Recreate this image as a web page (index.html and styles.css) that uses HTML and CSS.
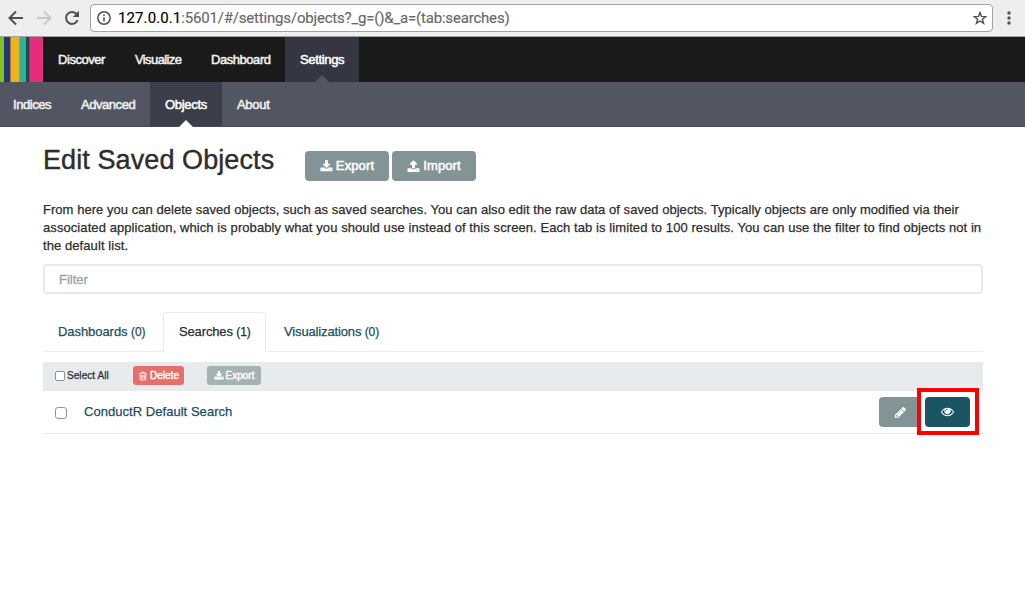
FILE: index.html
```html
<!DOCTYPE html>
<html lang="en">
<head>
<meta charset="utf-8">
<title>Settings - Kibana</title>
<link rel="stylesheet" href="styles.css">
</head>
<body>
<svg class="sprite" width="0" height="0">
  <symbol id="download" viewBox="0 0 1792 1792"><path d="M1344 1344q0-26-19-45t-45-19-45 19-19 45 19 45 45 19 45-19 19-45zm256 0q0-26-19-45t-45-19-45 19-19 45 19 45 45 19 45-19 19-45zm128-224v320q0 40-28 68t-68 28h-1472q-40 0-68-28t-28-68v-320q0-40 28-68t68-28h465l135 136q58 56 136 56t136-56l136-136h464q40 0 68 28t28 68zm-325-569q17 41-14 70l-448 448q-18 19-45 19t-45-19l-448-448q-31-29-14-70 17-39 59-39h256v-448q0-26 19-45t45-19h256q26 0 45 19t19 45v448h256q42 0 59 39z"/></symbol>
  <symbol id="upload" viewBox="0 0 1792 1792"><path d="M1344 1472q0-26-19-45t-45-19-45 19-19 45 19 45 45 19 45-19 19-45zm256 0q0-26-19-45t-45-19-45 19-19 45 19 45 45 19 45-19 19-45zm128-224v320q0 40-28 68t-68 28h-1472q-40 0-68-28t-28-68v-320q0-40 28-68t68-28h427q21 56 70.5 92t110.5 36h256q61 0 110.5-36t70.5-92h427q40 0 68 28t28 68zm-325-648q-17 40-59 40h-256v448q0 26-19 45t-45 19h-256q-26 0-45-19t-19-45v-448h-256q-42 0-59-40-17-39 14-69l448-448q18-19 45-19t45 19l448 448q31 30 14 69z"/></symbol>
  <symbol id="trash" viewBox="0 0 1792 1792"><path d="M704 736v576q0 14-9 23t-23 9h-64q-14 0-23-9t-9-23v-576q0-14 9-23t23-9h64q14 0 23 9t9 23zm256 0v576q0 14-9 23t-23 9h-64q-14 0-23-9t-9-23v-576q0-14 9-23t23-9h64q14 0 23 9t9 23zm256 0v576q0 14-9 23t-23 9h-64q-14 0-23-9t-9-23v-576q0-14 9-23t23-9h64q14 0 23 9t9 23zm128 724v-948h-896v948q0 22 7 40.5t14.5 27 10.5 8.5h832q3 0 10.5-8.5t14.5-27 7-40.5zm-672-1076h448l-48-117q-7-9-17-11h-317q-10 2-17 11zm928 32v64q0 14-9 23t-23 9h-96v948q0 83-47 143.5t-113 60.5h-832q-66 0-113-58.5t-47-141.5v-952h-96q-14 0-23-9t-9-23v-64q0-14 9-23t23-9h309l70-167q15-37 54-63t79-26h320q40 0 79 26t54 63l70 167h309q14 0 23 9t9 23z"/></symbol>
  <symbol id="pencil" viewBox="0 0 1792 1792"><path d="M491 1536l91-91-235-235-91 91v107h128v128h107zm523-928q0-22-22-22-10 0-17 7l-542 542q-7 7-7 17 0 22 22 22 10 0 17-7l542-542q7-7 7-17zm-54-192l416 416-832 832h-416v-416zm683 96q0 53-37 90l-166 166-416-416 166-165q36-38 90-38 53 0 91 38l235 234q37 39 37 91z"/></symbol>
  <symbol id="eye" viewBox="0 0 1792 1792"><path d="M1664 960q-152-236-381-353 61 104 61 225 0 185-131.5 316.5t-316.5 131.5-316.5-131.5-131.5-316.5q0-121 61-225-229 117-381 353 133 205 333.5 326.5t434.5 121.5 434.5-121.5 333.5-326.5zm-720-384q0-20-14-34t-34-14q-125 0-214.5 89.5t-89.5 214.5q0 20 14 34t34 14 34-14 14-34q0-86 61-147t147-61q20 0 34-14t14-34zm848 384q0 34-20 69-140 230-376.5 368.5t-499.5 138.5-499.5-139-376.5-368q-20-35-20-69t20-69q140-229 376.5-368t499.5-139 499.5 139 376.5 368q20 35 20 69z"/></symbol>
</svg>

<header class="browser">
  <div class="browser-nav">
    <svg class="nav-icon" viewBox="0 0 16 16"><path d="M15 8H2M8 1.5L1.5 8L8 14.5"/></svg>
    <svg class="nav-icon nav-icon-off" viewBox="0 0 16 16"><path d="M1 8H14M8 1.5L14.5 8L8 14.5"/></svg>
    <svg class="nav-icon" viewBox="0 0 16 16"><path d="M13.6 10.2A6 6 0 1 1 12.4 3.8L13.5 5"/><path class="solid" d="M15 .8V7H8.8z"/></svg>
  </div>
  <div class="address">
    <svg class="info-icon" viewBox="0 0 14 14"><circle cx="7" cy="7" r="6.2"/><path d="M7 6.2V10.6M7 3.4V5"/></svg>
    <span class="url"><span class="url-host">127.0.0.1</span>:5601/#/settings/objects?_g=()&amp;_a=(tab:searches)</span>
    <svg class="star-icon" viewBox="0 0 14 14"><path d="M7 1.5L8.5 5.4L12.7 5.6L9.4 8.2L10.6 12.4L7 10L3.4 12.4L4.6 8.2L1.3 5.6L5.5 5.4Z"/></svg>
  </div>
  <svg class="menu-icon" viewBox="0 0 4 14"><circle cx="2" cy="2" r="1.7"/><circle cx="2" cy="7" r="1.7"/><circle cx="2" cy="12" r="1.7"/></svg>
</header>

<nav class="topnav">
  <div class="logo"><i class="green"></i><i class="navy"></i><i class="yellow"></i><i class="teal"></i><i class="forest"></i><i class="pink"></i></div>
  <a class="tab discover">Discover</a>
  <a class="tab visualize">Visualize</a>
  <a class="tab dashboard">Dashboard</a>
  <a class="tab settings active">Settings</a>
</nav>
<nav class="subnav">
  <a class="tab indices">Indices</a>
  <a class="tab advanced">Advanced</a>
  <a class="tab objects active">Objects</a>
  <a class="tab about">About</a>
</nav>

<main class="page">
  <div class="heading">
    <h1 class="title">Edit Saved Objects</h1>
    <button class="btn"><svg class="icon"><use href="#download"/></svg><span>Export</span></button>
    <button class="btn"><svg class="icon"><use href="#upload"/></svg><span>Import</span></button>
  </div>
  <p class="intro"><span class="line1">From here you can delete saved objects, such as saved searches. You can also edit the raw data of saved objects. Typically objects are only modified via their</span><br><span class="line2">associated application, which is probably what you should use instead of this screen. Each tab is limited to 100 results. You can use the filter to find objects not in</span><br><span class="line2">the default list.</span></p>
  <input class="filter" type="text" placeholder="Filter">
  <div class="tabs">
    <a class="obj-tab dashboards">Dashboards <small>(0)</small></a>
    <a class="obj-tab searches current">Searches <small>(1)</small></a>
    <a class="obj-tab visualizations">Visualizations <small>(0)</small></a>
  </div>
  <div class="actions">
    <label class="select-all"><span class="check"></span><span>Select All</span></label>
    <button class="btn-xs danger"><svg class="icon-xs"><use href="#trash"/></svg><span>Delete</span></button>
    <button class="btn-xs muted"><svg class="icon-xs"><use href="#download"/></svg><span>Export</span></button>
  </div>
  <div class="row">
    <span class="check check-lg"></span>
    <a class="row-title">ConductR Default Search</a>
    <div class="row-actions">
      <button class="row-btn edit"><svg class="row-icon"><use href="#pencil"/></svg></button>
      <div class="highlight"><button class="row-btn view"><svg class="row-icon"><use href="#eye"/></svg></button></div>
    </div>
  </div>
</main>
</body>
</html>
```

FILE: styles.css
```css
* { box-sizing: border-box; }
body { margin: 0; width: 1025px; height: 614px; overflow: hidden; background: #fff; color: #2d2d2d; font: 13px/18px "Liberation Sans", Arial, sans-serif; -webkit-text-stroke: 0.25px; }
button { border: 0; margin: 0; padding: 0; font: inherit; color: #fff; }
.sprite { display: none; }

.browser { display: flex; align-items: center; height: 37px; background: #eee; border-bottom: 1px solid #a3a3a3; }
.browser-nav { display: flex; gap: 12px; width: 90px; padding-left: 8px; }
.nav-icon { width: 16px; height: 16px; fill: none; stroke: #505050; stroke-width: 2; }
.nav-icon-off { stroke: #c9c9c9; }
.nav-icon .solid { fill: #505050; stroke: none; }
.address { display: flex; align-items: center; width: 903px; height: 28px; padding: 0 5px 0 6px; background: #fff; border: 1px solid #a3a3a3; border-radius: 4px; }
.info-icon { width: 14px; height: 14px; fill: none; stroke: #505050; stroke-width: 1.5; }
.url { flex: 1; margin-left: 7px; font: 15px/20px Roboto, sans-serif; color: #686868; white-space: nowrap; letter-spacing: -0.19px; -webkit-text-stroke: 0.15px; }
.url-host { color: #000; letter-spacing: 0.1px; }
.star-icon { width: 14px; height: 14px; fill: none; stroke: #505050; stroke-width: 1.4; }
.menu-icon { width: 4px; height: 14px; margin-left: 14px; fill: #505050; }

.topnav, .subnav { display: flex; height: 45px; }
.topnav { background: #1a1a1a; }
.subnav { background: #525662; border-bottom: 1px solid #484a54; }
.logo { display: flex; width: 43px; }
.green { width: 4px; background: #7cc41b; }
.navy { width: 6px; background: #253478; }
.yellow { width: 9px; background: #f0b218; border-left: 1px solid #967d4a; }
.teal { width: 7px; background: #32b09c; border-left: 1px solid #9c9f4c; }
.forest { width: 3px; background: #0e5349; }
.pink { width: 14px; background: #e72c7c; border-left: 1px solid #a83666; }
.tab { position: relative; padding-left: 15px; line-height: 45px; color: #f2f2f2; white-space: nowrap; letter-spacing: -0.45px; -webkit-text-stroke: 0.5px; }
.discover { width: 77px; }
.visualize { width: 76px; letter-spacing: -0.6px; }
.dashboard { width: 89px; }
.settings { width: 74px; background: #343741; letter-spacing: -0.35px; }
.indices { width: 66px; padding-left: 13px; }
.advanced { width: 84px; }
.objects { width: 72px; background: #3b3e48; letter-spacing: -0.3px; }
.about { width: 62px; letter-spacing: -0.3px; }
.active { color: #fff; }
.active::after { content: ""; position: absolute; left: 50%; bottom: 0; margin-left: -7px; border: 7px solid transparent; border-top: 0; border-bottom-color: #525662; }
.objects::after { bottom: -1px; border-bottom-color: #fff; }

.page { width: 940px; margin-left: 43px; }
.heading { display: flex; gap: 3px; height: 74px; padding-top: 24px; }
.title { width: 259px; margin: -9px 0 0; font-size: 27px; font-weight: 400; line-height: 36px; white-space: nowrap; letter-spacing: 0.09px; -webkit-text-stroke: 0.4px; }
.btn { display: flex; align-items: center; justify-content: center; gap: 3px; width: 84px; height: 30px; border-radius: 4px; background: #839496; font-size: 13px; letter-spacing: 0.12px; -webkit-text-stroke: 0.5px; }
.icon { width: 13px; height: 13px; fill: #fff; stroke: none; }
.intro { margin: 0 0 9px; white-space: nowrap; }
.line1 { letter-spacing: 0.04px; }
.line2 { letter-spacing: 0.079px; }
.filter { display: block; width: 940px; height: 30px; padding: 0 14px; border: 2px solid #e6eaed; border-radius: 4px; outline: 0; font: inherit; -webkit-text-stroke: 0.3px; }
.filter::placeholder { color: #98a4a8; opacity: 1; }
.tabs { display: flex; height: 40px; margin-top: 18px; border-bottom: 1px solid #ebedef; }
.obj-tab { height: 40px; padding: 0 15px; line-height: 39px; color: #1b4f5e; white-space: nowrap; letter-spacing: -0.14px; }
.obj-tab small { font-size: 12px; }
.dashboards { width: 120px; letter-spacing: -0.06px; }
.searches { width: 103px; }
.visualizations { padding-left: 18px; }
.current { border: 1px solid #e6eaed; border-bottom-color: #fff; border-radius: 4px 4px 0 0; line-height: 37px; color: #2d2d2d; }
.actions { display: flex; align-items: center; height: 29px; margin-top: 10px; padding: 0 0 2px 12px; background: #e7ebee; }
.select-all { display: flex; align-items: center; gap: 2px; width: 78px; font-size: 10px; letter-spacing: 0.07px; }
.check { width: 10px; height: 10px; border: 1px solid #929292; border-radius: 2px; background: #fff; }
.check-lg { width: 12px; height: 12px; margin-top: 2px; border-radius: 3px; }
.btn-xs { display: flex; align-items: center; justify-content: center; gap: 2px; height: 19px; border-radius: 3px; font-size: 10px; -webkit-text-stroke: 0.4px; }
.icon-xs { width: 10px; height: 10px; fill: #fff; stroke: #fff; stroke-width: 30px; }
.danger { width: 51px; margin-right: 23px; background: #e3706a; }
.muted { width: 54px; background: #a5b2b2; }
.row { display: flex; align-items: center; height: 43px; padding-left: 12px; border-bottom: 1px solid #e6eaed; }
.row-title { margin-left: 17px; color: #1b4f5e; white-space: nowrap; letter-spacing: 0.04px; }
.row-actions { display: flex; align-items: center; margin: 0 4px 0 auto; }
.row-btn { display: flex; align-items: center; justify-content: center; height: 30px; border-radius: 4px; }
.row-icon { width: 13px; height: 13px; fill: #fff; stroke: none; }
.edit { width: 38px; padding-left: 4px; border-radius: 4px 0 0 4px; background: #839496; }
.highlight { width: 62px; height: 47px; margin: -1px 0 1px; padding: 5px 4px; border: 4px solid #f00; }
.view { width: 45px; background: #1b5563; }
```
